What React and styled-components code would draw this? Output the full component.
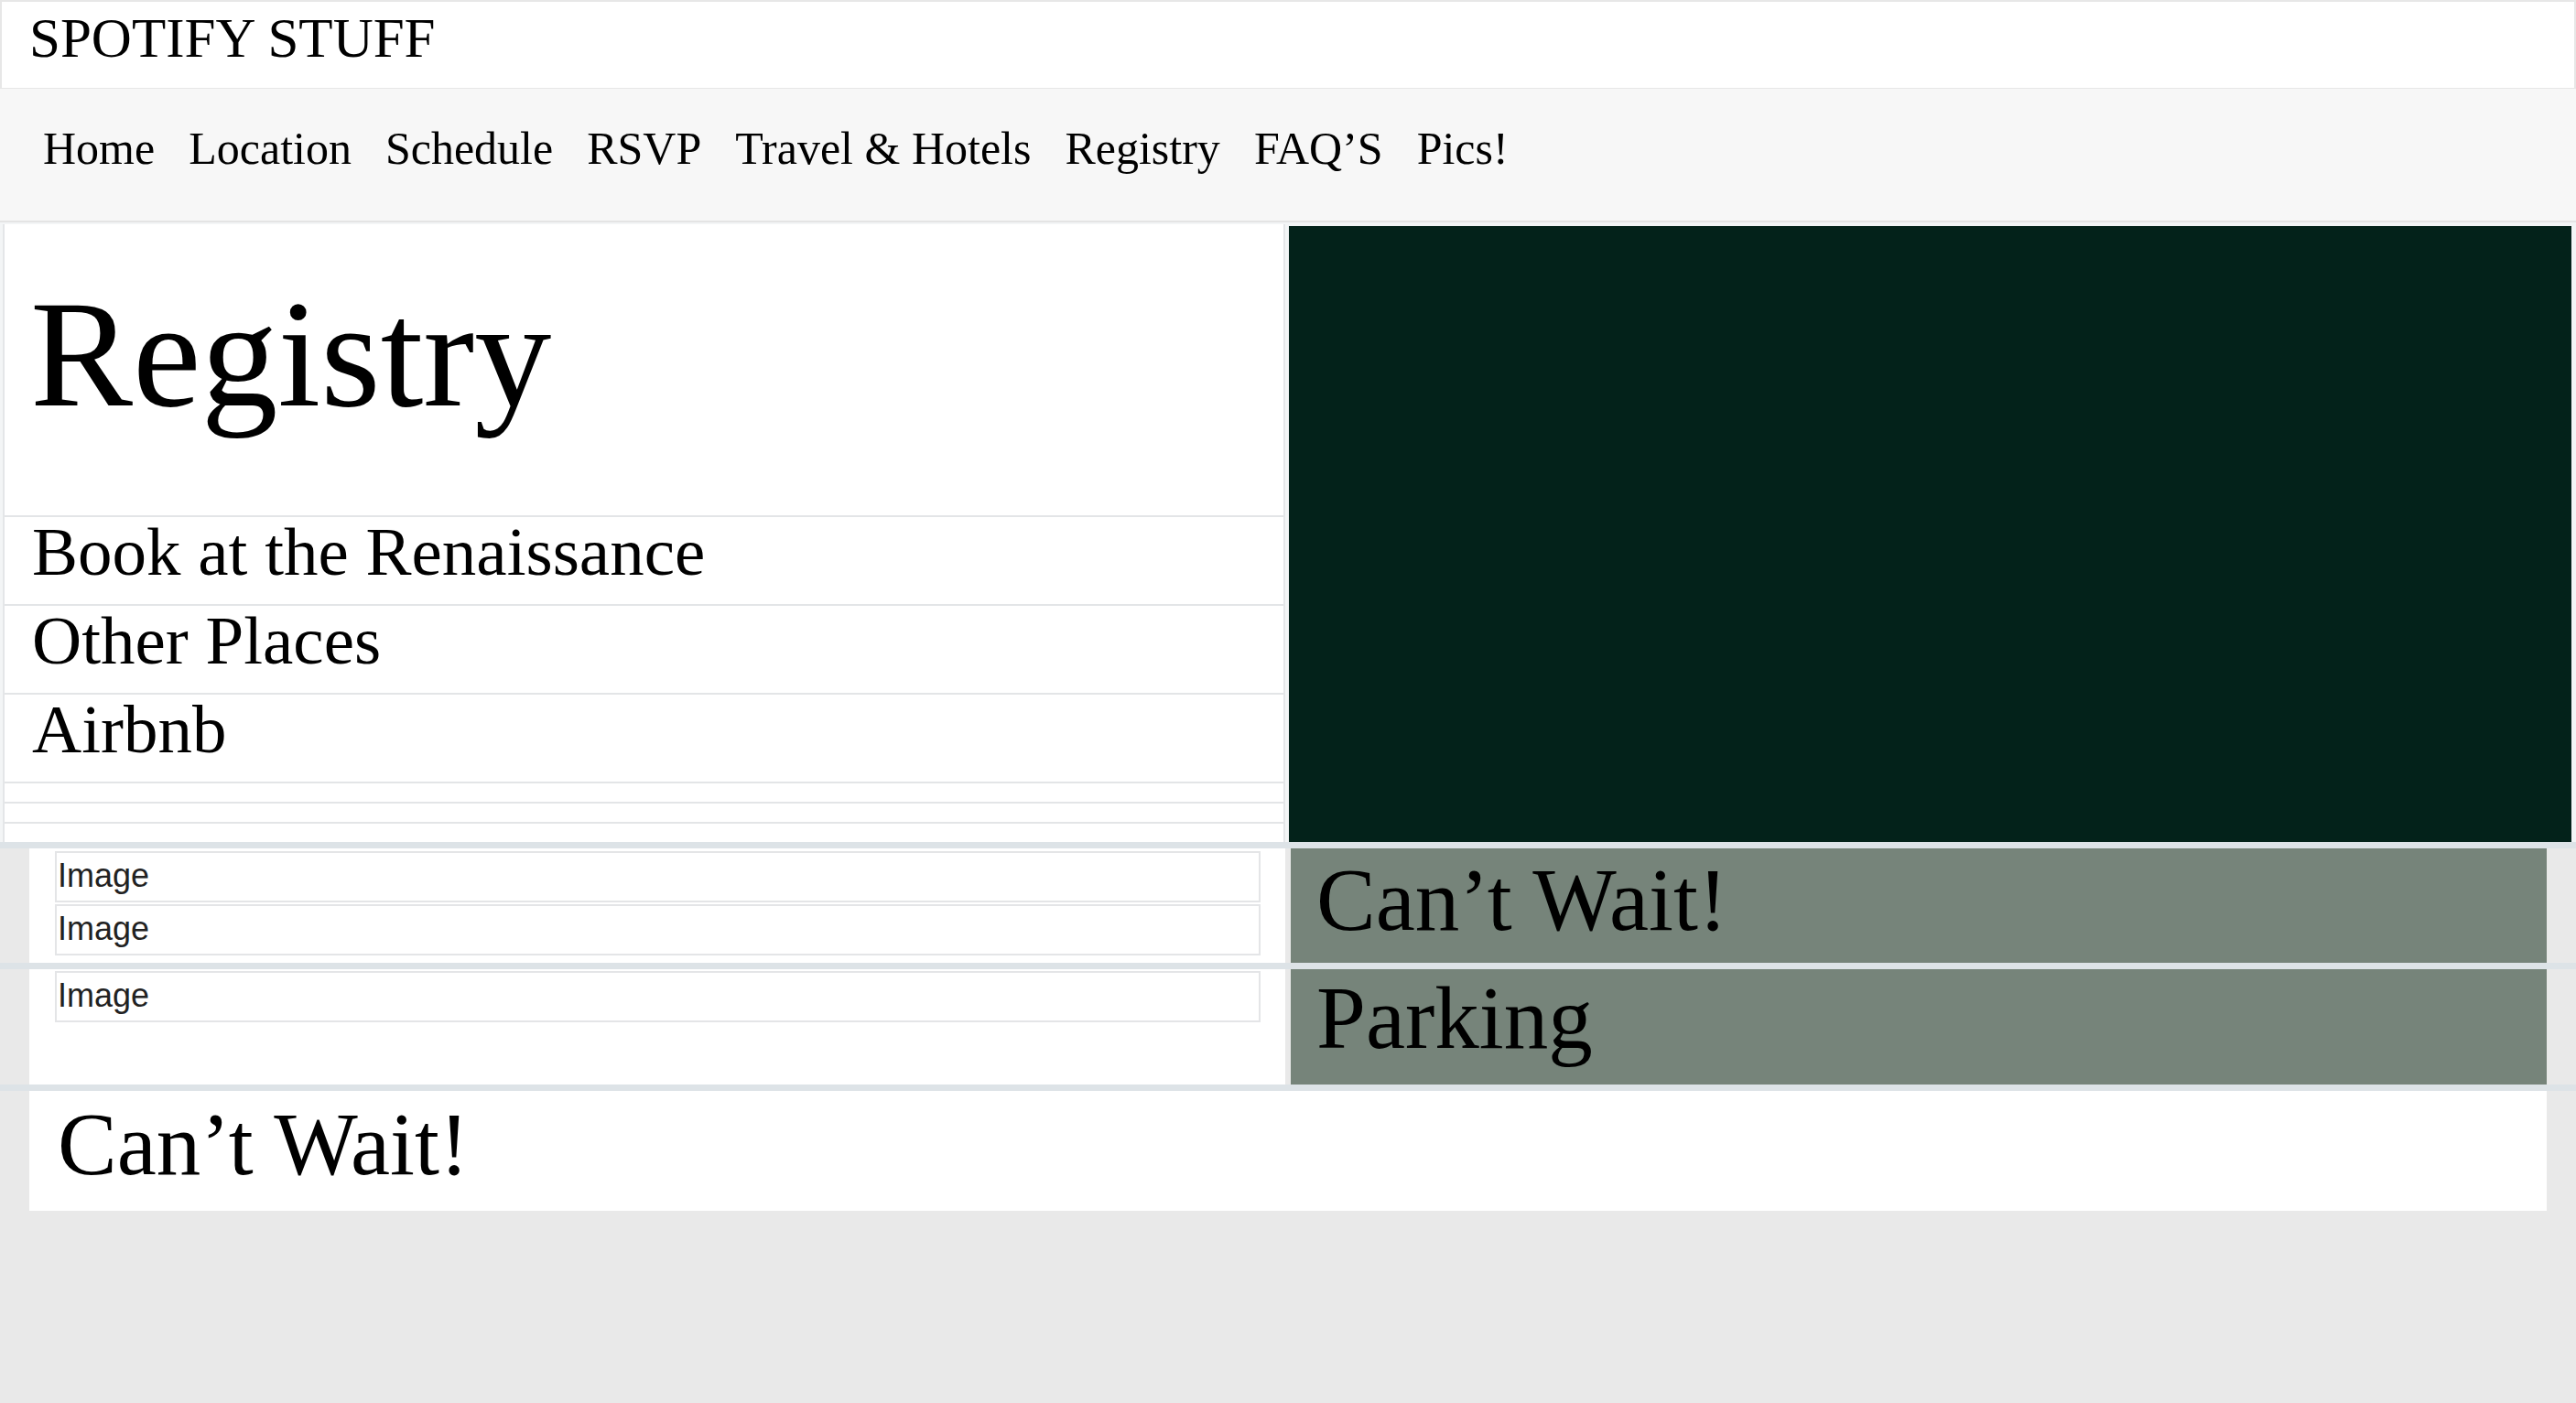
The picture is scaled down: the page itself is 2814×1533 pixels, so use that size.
import React from 'react'
import styled, { createGlobalStyle } from 'styled-components'

const GlobalStyle = createGlobalStyle`
  html, body {
    margin: 0;
    padding: 0;
    background: #e9e9e9;
    min-height: 100vh;
  }
  * {
    box-sizing: border-box;
  }
`

const Page = styled.div`
  font-family: 'Liberation Serif', 'Times New Roman', serif;
  color: #000;
  width: 100%;
`

const Header = styled.header`
  height: 97px;
  background: #fff;
  border: 2px solid #e7e7e7;
  border-bottom-width: 1px;
  display: flex;
  align-items: center;
  padding-left: 30px;
  padding-bottom: 16px;
  h1 {
    margin: 0;
    font-weight: normal;
    font-size: 61px;
    line-height: 1;
  }
`

const Nav = styled.nav`
  height: 146px;
  background: #f7f7f7;
  border-bottom: 2px solid #e4e4e4;
  display: flex;
  align-items: center;
  gap: 37px;
  padding-left: 47px;
  padding-bottom: 14px;
  a {
    font-size: 50px;
    line-height: 1;
    color: #000;
    text-decoration: none;
  }
`

const TopRow = styled.section`
  display: grid;
  grid-template-columns: 1fr 1fr;
  column-gap: 4px;
  padding: 2px 5px 0 3px;
  background: #f3f5f6;
  border-bottom: 7px solid #dde3e7;
`

const SidePanel = styled.div`
  background: #fff;
  border-left: 2px solid #e4e6e8;
  border-right: 2px solid #e4e6e8;
  display: flex;
  flex-direction: column;
`

const Title = styled.h2`
  margin: 0;
  height: 318px;
  padding: 57px 0 0 28px;
  font-weight: normal;
  font-size: 168px;
  line-height: 1;
`

const ListRow = styled.div`
  height: ${p => (p.$thin ? '22px' : '97px')};
  border-top: 2px solid #e3e5e7;
  padding-left: 30px;
  font-size: 75px;
  line-height: 1;
`

const DarkPanel = styled.div`
  background: #03221a;
  margin-top: 2px;
`

const Band = styled.section`
  display: grid;
  grid-template-columns: ${p => (p.$single ? '1fr' : '1fr 1fr')};
  column-gap: 6px;
  height: ${p => p.$h}px;
  padding: 0 32px;
  background: #e9e9e9;
  border-bottom: ${p => (p.$last ? 'none' : '7px solid #dde3e7')};
`

const Cell = styled.div`
  background: ${p => (p.$sage ? '#76847a' : '#fff')};
  padding: ${p => p.$pad || '0'};
  display: flex;
  flex-direction: column;
  gap: 2px;
`

const BigText = styled.div`
  font-size: 97px;
  line-height: 1;
`

const ImageBox = styled.div`
  height: 56px;
  border: 2px solid #e4e5e7;
  padding: 4px 0 0 1px;
  font-family: 'Liberation Sans', Arial, sans-serif;
  font-size: 36px;
  line-height: 1.15;
  color: #222;
`

const navItems = ['Home', 'Location', 'Schedule', 'RSVP', 'Travel & Hotels', 'Registry', 'FAQ’S', 'Pics!']

export default function App() {
  return (
    <Page>
      <GlobalStyle />
      <Header>
        <h1>SPOTIFY STUFF</h1>
      </Header>
      <Nav>
        {navItems.map(item => (
          <a key={item} href="#">{item}</a>
        ))}
      </Nav>
      <TopRow>
        <SidePanel>
          <Title>Registry</Title>
          <ListRow>Book at the Renaissance</ListRow>
          <ListRow>Other Places</ListRow>
          <ListRow>Airbnb</ListRow>
          <ListRow $thin />
          <ListRow $thin />
          <ListRow $thin />
        </SidePanel>
        <DarkPanel />
      </TopRow>
      <Band $h={132}>
        <Cell $pad="3px 27px 0 28px">
          <ImageBox>Image</ImageBox>
          <ImageBox>Image</ImageBox>
        </Cell>
        <Cell $sage $pad="8px 28px 0">
          <BigText>Can’t Wait!</BigText>
        </Cell>
      </Band>
      <Band $h={133}>
        <Cell $pad="2px 27px 0 28px">
          <ImageBox>Image</ImageBox>
        </Cell>
        <Cell $sage $pad="5px 28px 0">
          <BigText>Parking</BigText>
        </Cell>
      </Band>
      <Band $h={131} $single $last>
        <Cell $pad="10px 31px 0">
          <BigText>Can’t Wait!</BigText>
        </Cell>
      </Band>
    </Page>
  )
}
